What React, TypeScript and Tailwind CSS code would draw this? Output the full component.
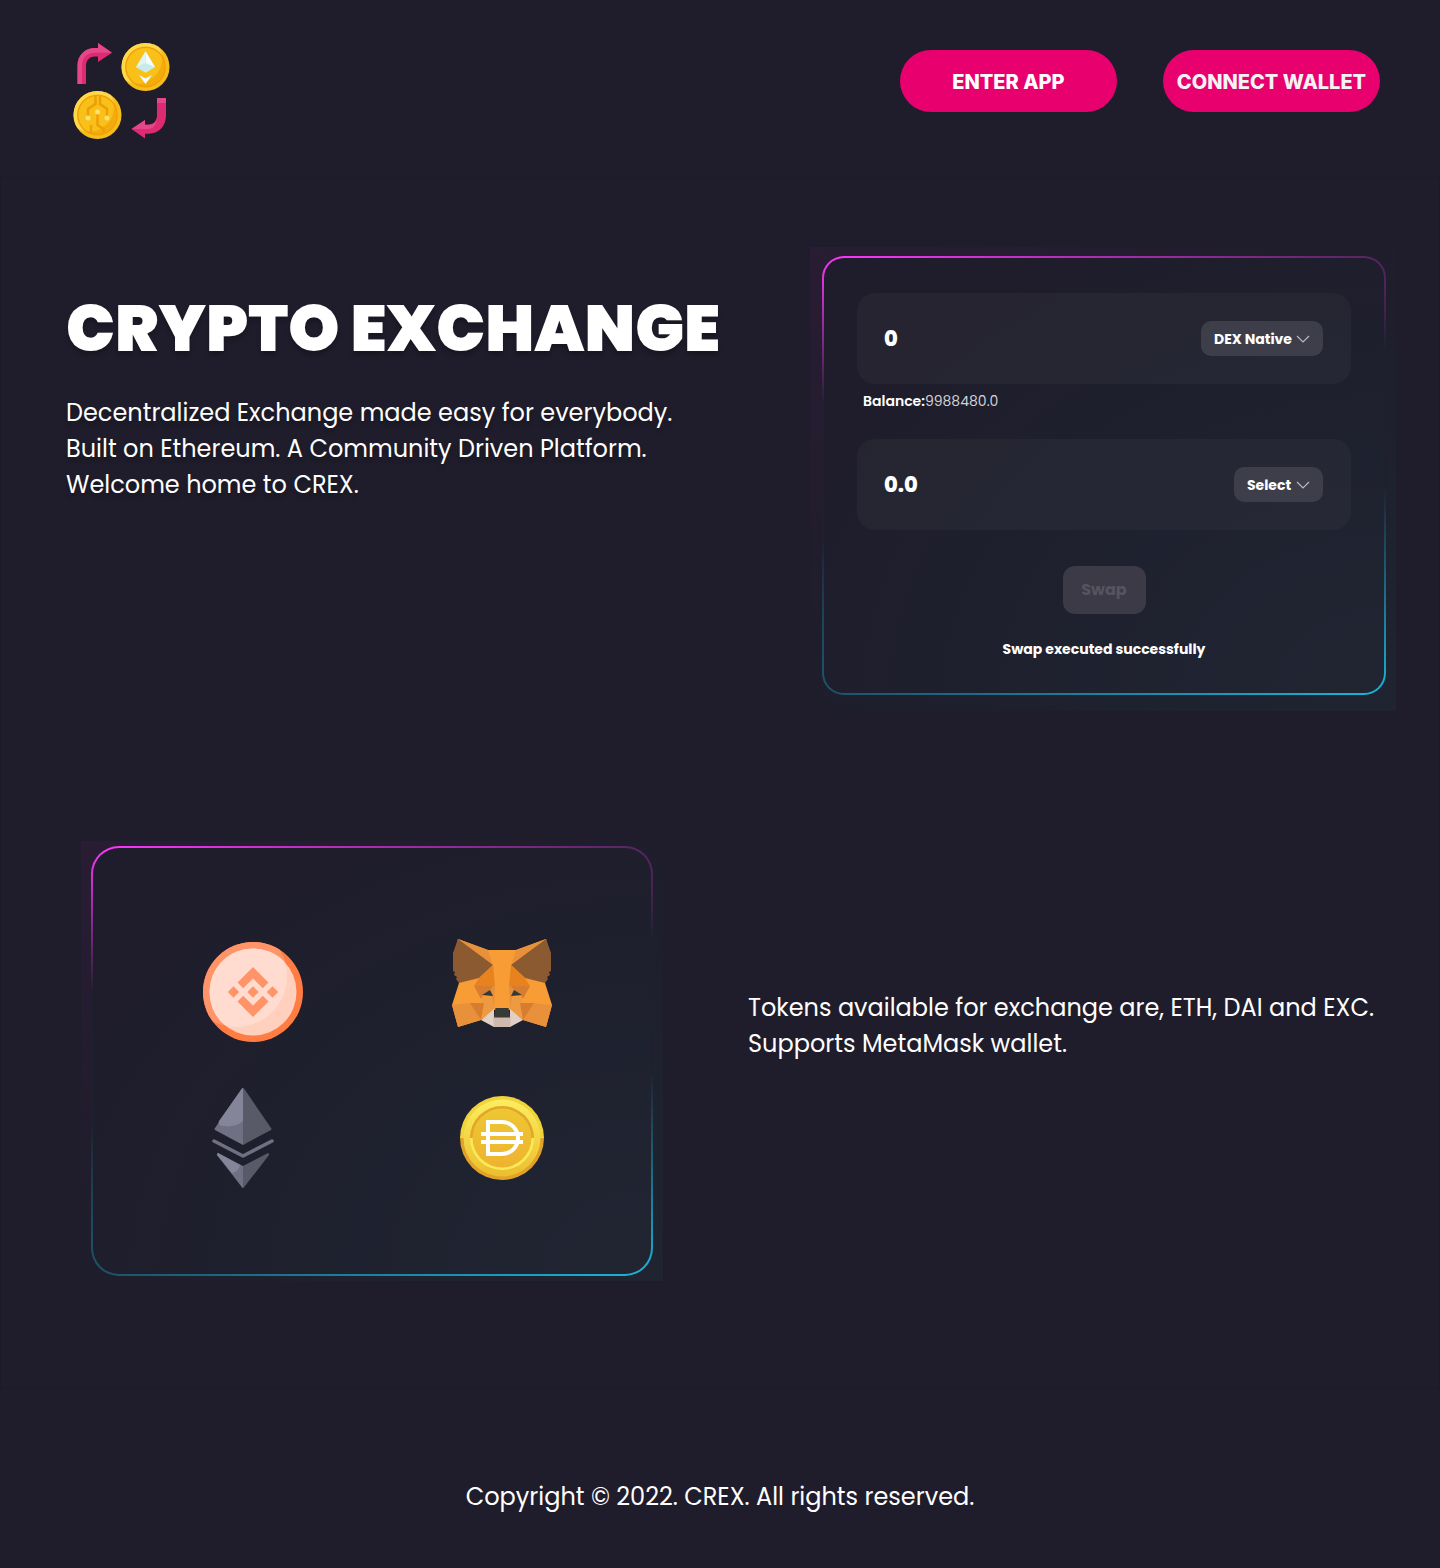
import React, { useState } from "react";

const body = "font-['Poppins','Open_Sans',sans-serif]";

function Coin({ id, cx, cy }: { id: string; cx: number; cy: number }) {
  return (
    <g>
      <defs>
        <clipPath id={id}>
          <circle cx={cx} cy={cy} r="24" />
        </clipPath>
        <clipPath id={`${id}Face`}>
          <circle cx={cx} cy={cy} r="19" />
        </clipPath>
      </defs>
      <circle cx={cx} cy={cy} r="24" fill="#f7bd1c" />
      <circle cx={cx - 8} cy={cy - 8} r="24.500" fill="#fdd84a" clipPath={`url(#${id})`} />
      <circle cx={cx} cy={cy} r="20.500" fill="#f0a208" />
      <circle cx={cx} cy={cy} r="19" fill="#f4ab0c" />
      <circle cx={cx - 8} cy={cy - 8} r="24.500" fill="#f8c019" clipPath={`url(#${id}Face)`} />
    </g>
  );
}

function Logo() {
  return (
    <svg width="98" height="98" viewBox="0 0 98 98" role="img" aria-label="CREX">
      <path d="M4.500 43V25c0-11 7.500-18 17.500-18h3V2l14 9.700L25 21v-5.400h-3c-6 0-9 4-9 9.400v18z" fill="#dd2a70" />
      <path d="M4.500 43V25c0-11 7.500-18 17.500-18h3V2l14 9.700H22C13.500 11.700 9 17 9 25v18z" fill="#e6468a" />
      <path d="M93 57v17.500c0 11-7.500 18.200-17.500 18.200H72v4.800L58.500 88 72 79v4.800h3.500c5.500 0 8.500-4 8.500-9.300V57z" fill="#dd2a70" />
      <path d="M84 57h9v5h-9zM58.500 88L72 79v4.800h3.500c5.500 0 8.500-4 8.500-9.300 0 9-3 13.500-9 13.500z" fill="#e6468a" />
      <Coin id="ethCoin" cx={72.5} cy={26} />
      <path d="M72.500 10L63 26l9.500 5.500z" fill="#dff5f4" />
      <path d="M72.500 10L82 26l-9.500 5.500z" fill="#f4ffff" />
      <path d="M63 26l9.500-4 9.500 4-9.500 5.500z" fill="#c6ebe9" />
      <path d="M66 34l6.500 3.500L79 34l-6.500 9z" fill="#effdfc" />
      <Coin id="techCoin" cx={24.5} cy={74} />
      <path
        d="M22.500 55v8l-7.500 5v7M27 55v8l7 5v7M24.500 73v11l6 4v4M18 92v-8"
        fill="none"
        stroke="#ec9f08"
        strokeWidth="2.500"
      />
      <circle cx="24.500" cy="71" r="2.500" fill="#fde070" />
      <circle cx="15" cy="77" r="2.500" fill="#fde070" />
      <circle cx="34" cy="77" r="2.500" fill="#fde070" />
    </svg>
  );
}

function Binance() {
  return (
    <svg width="100" height="100" viewBox="0 0 100 100" role="img" aria-label="BNB">
      <defs>
        <clipPath id="bnbOuter">
          <circle cx="50" cy="50" r="50" />
        </clipPath>
        <clipPath id="bnbInner">
          <circle cx="50" cy="50" r="43.500" />
        </clipPath>
      </defs>
      <circle cx="50" cy="50" r="50" fill="#ff7d42" />
      <circle cx="33" cy="34" r="51" fill="#ff9468" clipPath="url(#bnbOuter)" />
      <circle cx="50" cy="50" r="43.500" fill="#ffd0be" />
      <circle cx="33" cy="34" r="51" fill="#ffdccf" clipPath="url(#bnbInner)" />
      <g fill="#ff9468">
        <path d="M50 25l15.500 15.500-5.700 5.700L50 36.500l-9.800 9.700-5.700-5.700zM50 75l15.500-15.500-5.700-5.700L50 63.500l-9.800-9.700-5.700 5.700z" />
        <path d="M50 44.300l5.700 5.700-5.700 5.700-5.700-5.700zM30.500 44.300l5.700 5.700-5.700 5.700-5.700-5.700zM69.500 44.300l5.700 5.700-5.700 5.700-5.700-5.700z" />
      </g>
    </svg>
  );
}

function FoxHalf() {
  return (
    <>
      <path d="M6 1L36 12h14v60H42L29 82 6 89 0 67 7 45 2 16z" fill="#f89d35" />
      <path d="M6 1l30 11 5 16z" fill="#e8913a" />
      <path d="M6 1l35 26-14 13L7 45l-3-4 1-2-3-2 1-3-2-1L1 15z" fill="#8c5a30" />
      <path d="M41 27l2 21H22l5-8z" fill="#e8821e" />
      <path d="M22 48h21l-1 23-3-13-8-1z" fill="#e58f3c" />
      <path d="M22 48h19l-3 4-7 5-2 4z" fill="#d87c30" />
      <path d="M30 59h10l2 12-11 9z" fill="#ee9a42" />
      <path d="M0 67l19-2 10 17-23 7z" fill="#e8913a" />
      <path d="M18 65h14l-3 17z" fill="#d87c30" />
      <path d="M30 57l8-5 3 6z" fill="#333a37" />
      <path d="M29 82l13-11v18z" fill="#e2cfc5" />
    </>
  );
}

function Fox() {
  return (
    <svg width="100" height="90" viewBox="0 0 100 90" role="img" aria-label="MetaMask">
      <path d="M36 12h28l-7 60H43z" fill="#f89d35" />
      <FoxHalf />
      <g transform="matrix(-1 0 0 1 100 0)">
        <FoxHalf />
      </g>
      <path d="M48 12h4v60h-4z" fill="#f89d35" />
      <path d="M41.500 78h17v11h-17z" fill="#cfb9ae" />
      <path d="M43.500 70h13l1.500 9.500H42z" fill="#393a35" />
    </svg>
  );
}

function Ethereum() {
  return (
    <svg width="62" height="100" viewBox="0 0 62 100" role="img" aria-label="ETH">
      <path d="M30 .5q1-1 1 0v56.500L3 42q-1-1 0-2z" fill="#707082" />
      <path d="M30 .5q1-1 1 0V33C26 38 15 40 8 37q-2-1-1-4z" fill="#85859a" />
      <path d="M32 .5q-1-1-1 0v56.500L59 42q1-1 0-2z" fill="#595a67" />
      <path d="M2 53l29 15 29-15" fill="none" stroke="#707082" strokeWidth="3.500" strokeLinecap="round" strokeLinejoin="round" />
      <path d="M6 65l25 13v22q-1 0-2-2L5 67q0-2 1-2z" fill="#707082" />
      <path d="M6 65l22 12c-1 4-4 8-8 8L5 67q0-2 1-2z" fill="#85859a" />
      <path d="M56 65L31 78v22q1 0 2-2l24-31q0-2-1-2z" fill="#595a67" />
    </svg>
  );
}

function Dai() {
  return (
    <svg width="84" height="84" viewBox="0 0 84 84" role="img" aria-label="DAI">
      <defs>
        <linearGradient id="daiRing" x1="0" y1="0" x2="0" y2="1">
          <stop offset="0" stopColor="#fbee5e" />
          <stop offset="1" stopColor="#ecbe2e" />
        </linearGradient>
        <linearGradient id="daiFace" x1="0" y1="0" x2="0" y2="1">
          <stop offset="0" stopColor="#edc733" />
          <stop offset="1" stopColor="#efb32f" />
        </linearGradient>
      </defs>
      <path d="M0 42a42 42 0 0 1 84 0z" fill="#f1d33c" />
      <path d="M0 42a42 42 0 0 0 84 0z" fill="#e2a128" />
      <circle cx="42" cy="42" r="38.500" fill="url(#daiRing)" />
      <path d="M10 42a32 32 0 0 1 64 0z" fill="#e2a62a" />
      <path d="M10 42a32 32 0 0 0 64 0z" fill="#fbea58" />
      <circle cx="42" cy="42" r="29.500" fill="url(#daiFace)" />
      <path d="M28 26h14a16 16 0 0 1 0 32H28zM21 38h42M21 46h42" fill="none" stroke="#fff" strokeWidth="4" />
    </svg>
  );
}

function TokenSelect({ label, options, className }: { label: string; options: string[]; className: string }) {
  return (
    <div className="relative">
      <select
        aria-label={label}
        className={`block h-[35px] appearance-none rounded-[10px] bg-[#3e3e4a] pl-[13px] text-sm font-bold text-white ${className}`}
      >
        {options.map((o) => (
          <option key={o}>{o}</option>
        ))}
      </select>
      <svg className="pointer-events-none absolute top-[14px] right-[13px]" width="14" height="8" viewBox="0 0 14 8" fill="none" stroke="#b9b9c0" strokeWidth="1.200">
        <path d="M1 1l6 6 6-6" />
      </svg>
    </div>
  );
}

function AmountRow({ label, initial, children }: { label: string; initial: string; children: React.ReactNode }) {
  const [value, setValue] = useState(initial);
  return (
    <div className="flex h-[91px] items-center justify-between rounded-[18px] bg-white/3 pr-7 pl-[27px]">
      <input
        aria-label={label}
        value={value}
        onChange={(e) => setValue(e.target.value)}
        className="w-40 bg-transparent text-[21px] font-extrabold text-white outline-none"
      />
      {children}
    </div>
  );
}

const halo =
  "bg-[radial-gradient(ellipse_at_100%_100%,#202431_0%,#1e212e_35%,#1f1d2b00_75%),radial-gradient(ellipse_at_0%_0%,#291c34_0%,#1f1d2b_60%)]";
const card =
  "border-2 border-transparent [background:radial-gradient(ellipse_at_100%_100%,#212532_0%,#1e202e_50%,#1f1d2b_80%)_padding-box,radial-gradient(130%_34%_at_0%_0%,#ff37ff_0%,#ff37ff00_100%)_border-box,radial-gradient(150%_48%_at_100%_100%,#1ab5dc_0%,#1ab5dc00_100%)_border-box,linear-gradient(#1f1f2d,#1f1f2d)_border-box]";

export default function App() {
  return (
    <div className={`min-h-screen bg-[#1f1d2b] text-white ${body}`}>
      <header className="flex h-[177px] items-start justify-between pt-[41px] pr-[60px] pl-[73px]">
        <a href="#">
          <Logo />
        </a>
        <nav className="flex gap-[46px] pt-[9px] font-['Inter',sans-serif] text-xl font-extrabold">
          <button className="h-[62px] w-[217px] rounded-[31px] bg-[#e8006f] pt-[2px]">ENTER APP</button>
          <button className="h-[62px] w-[217px] rounded-[31px] bg-[#e8006f] pt-[2px] whitespace-nowrap text-[#f3f3f3]">CONNECT WALLET</button>
        </nav>
      </header>

      <main className="border border-[#1c1a27] pb-[107px]">
        <section className="flex items-start justify-between pt-[69px] pr-[43px] pl-[65px]">
          <div className="pt-8 text-shadow-[0_4px_4px_rgb(0_0_0/0.25)]">
            <h1 className="pt-px text-[65px] leading-[98px] font-black whitespace-nowrap">CRYPTO EXCHANGE</h1>
            <p className="mt-[17px] text-2xl leading-9">
              Decentralized Exchange made easy for everybody.
              <br />
              Built on Ethereum. A Community Driven Platform.
              <br />
              Welcome home to CREX.
            </p>
          </div>
          <div className={`w-[586px] pt-[9px] pr-[10px] pb-4 pl-3 ${halo}`}>
            <form className={`rounded-[22px] px-[33px] pt-[35px] pb-[33px] ${card}`} onSubmit={(e) => e.preventDefault()}>
              <AmountRow label="Amount to swap" initial="0">
                <TokenSelect label="Token to swap" options={["DEX Native", "ETH", "DAI"]} className="w-[122px]" />
              </AmountRow>
              <p className="mt-1 ml-[6px] h-[51px] text-sm leading-[26px] text-[#d2d2d5]">
                <b className="font-semibold text-white">Balance:</b>9988480.0
              </p>
              <AmountRow label="Amount received" initial="0.0">
                <TokenSelect label="Token received" options={["Select", "ETH", "DAI"]} className="w-[89px]" />
              </AmountRow>
              <div className="flex flex-col items-center pt-9">
                <button disabled className="h-12 w-[83px] rounded-xl bg-[#3b3a46] text-base font-bold text-[#55545f]">
                  Swap
                </button>
                <p className="mt-6 text-sm leading-[22px] font-bold">Swap executed successfully</p>
              </div>
            </form>
          </div>
        </section>

        <section className="flex items-start justify-between pt-[130px] pr-[65px] pl-20">
          <div className={`w-[582px] px-[10px] pt-[5px] pb-[5px] ${halo}`}>
            <div className={`grid h-[430px] grid-cols-2 content-start rounded-[28px] pt-[88px] pr-[25px] pl-[35px] ${card}`}>
              <div className="flex h-[150px] items-start justify-center pt-[6px]">
                <Binance />
              </div>
              <div className="flex h-[150px] items-start justify-center pt-[2px]">
                <Fox />
              </div>
              <div className="flex justify-center pt-[2px] pr-5">
                <Ethereum />
              </div>
              <div className="flex justify-center pt-[10px]">
                <Dai />
              </div>
            </div>
          </div>
          <p className="pt-[149px] text-2xl leading-9">
            Tokens available for exchange are, ETH, DAI and EXC.
            <br />
            Supports MetaMask wallet.
          </p>
        </section>
      </main>

      <footer className="pt-[90px] pb-[52px] text-center text-2xl leading-9">Copyright © 2022. CREX. All rights reserved.</footer>
    </div>
  );
}
